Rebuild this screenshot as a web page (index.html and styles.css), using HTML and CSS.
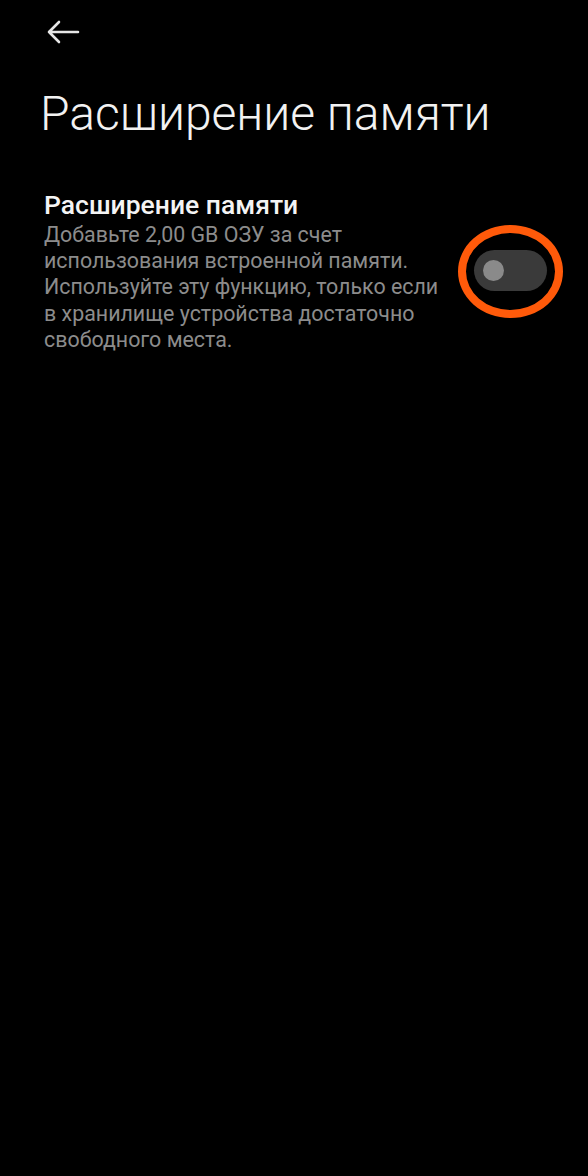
FILE: index.html
```html
<!DOCTYPE html>
<html lang="ru">
<head>
<meta charset="utf-8">
<link rel="stylesheet" href="styles.css">
</head>
<body>
<div class="screen">
  <header class="topbar">
    <svg class="back" width="34" height="24" viewBox="0 0 34 24">
      <path d="M32 12H3M13 2L3 12l10 10" fill="none" stroke="#e6e6e6" stroke-width="2.6" stroke-linecap="round" stroke-linejoin="round"/>
    </svg>
  </header>
  <h1 class="title">Расширение памяти</h1>
  <section class="row">
    <div class="text">
      <div class="row-title">Расширение памяти</div>
      <div class="row-desc">Добавьте 2,00 GB ОЗУ за счет использования встроенной памяти. Используйте эту функцию, только если в хранилище устройства достаточно свободного места.</div>
    </div>
    <div class="switch-wrap">
      <div class="switch"><div class="knob"></div></div>
      <div class="ring"></div>
    </div>
  </section>
</div>
</body>
</html>
```
FILE: styles.css
```css
html, body {
  margin: 0;
  padding: 0;
  background: #000;
}
.screen {
  width: 588px;
  height: 1176px;
  background: #000;
  font-family: Roboto, "Noto Sans", sans-serif;
  overflow: hidden;
}
.topbar {
  height: 64px;
  padding-left: 46px;
  padding-top: 20px;
  box-sizing: border-box;
}
.back { display: block; }
.title {
  margin: 0;
  padding-left: 40px;
  font-weight: 300;
  font-size: 48px;
  line-height: 56px;
  color: #f2f2f2;
  margin-top: 22px;
}
.row {
  display: flex;
  align-items: center;
  padding-left: 44px;
  margin-top: 48px;
}
.text {
  width: 410px;
  flex: none;
}
.row-title {
  font-size: 26.5px;
  font-weight: 500;
  color: #f4f4f4;
  line-height: 30px;
}
.row-desc {
  font-size: 21.4px;
  line-height: 26.2px;
  color: #8c8c8c;
  margin-top: 2px;
}
.switch-wrap {
  position: relative;
  margin-left: 20px;
  margin-top: -2px;
}
.switch {
  width: 73px;
  height: 41px;
  border-radius: 21px;
  background: #3a3a3a;
  display: flex;
  align-items: center;
  padding-left: 9px;
  box-sizing: border-box;
}
.knob {
  width: 21px;
  height: 21px;
  border-radius: 50%;
  background: #8a8a8a;
}
.ring {
  position: absolute;
  left: -16px;
  top: -25px;
  width: 89px;
  height: 77px;
  border: 8px solid #ff5a0a;
  border-radius: 50%;
}
```
